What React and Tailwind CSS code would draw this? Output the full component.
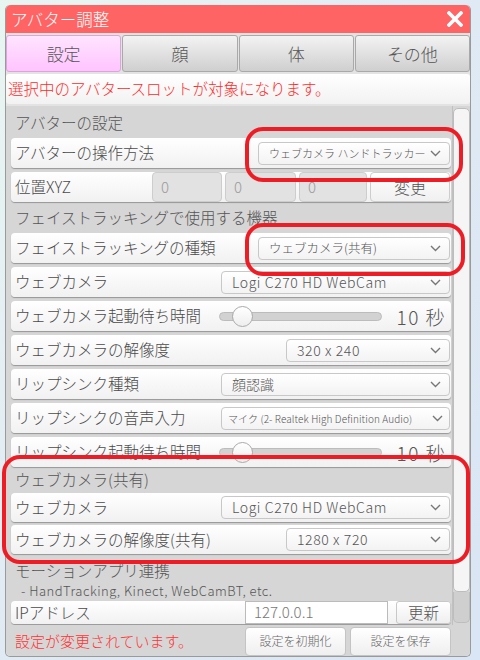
import React from 'react'

// 下向き矢印
function Chevron() {
  return (
    <svg width="11" height="7" viewBox="0 0 11 7" className="shrink-0">
      <polyline points="1,1 5.5,5.5 10,1" fill="none" stroke="#777" strokeWidth="1.4" />
    </svg>
  )
}

function Select({ value, className, textClass }) {
  return (
    <div className={`flex h-[23px] items-center justify-between rounded-[4px] border border-[#c8c8c8] bg-gradient-to-b from-white to-[#f3f3f3] pl-[10px] pr-[8px] ${className}`}>
      <span className={`whitespace-nowrap text-[#555] ${textClass}`}>{value}</span>
      <Chevron />
    </div>
  )
}

function Row({ label, children, className = 'h-[30px] mt-[4px]' }) {
  return (
    <div className={`flex items-center justify-between rounded-[4px] bg-gradient-to-b from-white to-[#f1f1f1] pl-[4px] pr-[1px] shadow-[0_1px_1px_rgba(0,0,0,0.3)] ${className}`}>
      <span className="whitespace-nowrap text-[15.5px] text-[#4a4a4a]">{label}</span>
      {children}
    </div>
  )
}

function Heading({ children, className = 'mt-[4px] h-[23px]' }) {
  return (
    <div className={`flex items-center pl-[4px] text-[15.5px] text-[#555] ${className}`}>{children}</div>
  )
}

function Slider() {
  return (
    <div className="flex items-center">
      <div className="relative h-[9px] w-[163px] rounded-full border border-[#bcbcbc] bg-[#d2d2d2]">
        <div className="absolute left-[12px] top-[-7px] h-[21px] w-[21px] rounded-full border border-[#aaa] bg-gradient-to-b from-white to-[#eee]" />
      </div>
      <span className="ml-[14px] mr-[4px] whitespace-nowrap text-[19px] leading-none tracking-[1.5px] text-[#555]">10 秒</span>
    </div>
  )
}

function Tab({ label, active }) {
  return (
    <div
      className={`flex items-center justify-center rounded-[3px] border text-[17px] text-[#555] ${
        active
          ? 'border-[#d9a6d9] bg-gradient-to-b from-[#ffe4ff] to-[#ffc4ff]'
          : 'border-[#a9a9a9] bg-gradient-to-b from-[#f3f3f3] to-[#cfcfcf]'
      }`}
    >
      {label}
    </div>
  )
}

export default function App() {
  return (
    <div className="relative h-[660px] w-[480px] overflow-hidden bg-gradient-to-br from-[#e8f6f2] via-[#e0eaf4] to-[#dae5f5] pl-[5px] pt-[5px] font-['Noto_Sans_CJK_JP',sans-serif] font-light">
      <div className="w-[466px] rounded-[5px] border-x border-b border-[#9a9a9a] bg-[#e3e3e3]">
        {/* タイトルバー */}
        <div className="flex h-[28px] items-center justify-between rounded-t-[5px] bg-[#ff6464] pl-[5px] pr-[7px]">
          <span className="text-[16.5px] text-white">アバター調整</span>
          <svg width="16" height="16" viewBox="0 0 16 16">
            <path d="M2 2 L14 14 M14 2 L2 14" stroke="white" strokeWidth="3.6" strokeLinecap="square" />
          </svg>
        </div>

        {/* タブ */}
        <div className="mt-[2px] grid h-[37px] grid-cols-4 gap-[1px]">
          <Tab label="設定" active />
          <Tab label="顔" />
          <Tab label="体" />
          <Tab label="その他" />
        </div>

        {/* メッセージ */}
        <div className="mt-[2px] flex h-[30px] items-center rounded-[3px] bg-gradient-to-b from-white to-[#f2f2f2] pl-[2px] text-[15.5px] text-[#ff2b2b]">
          選択中のアバタースロットが対象になります。
        </div>

        {/* 設定パネル */}
        <div className="mt-[2px] flex h-[519px] overflow-hidden bg-[#d6d6d6]">
          <div className="flex-1 pl-[5px] pr-[1px] pt-[1px]">
            <Heading>アバターの設定</Heading>
            <Row label="アバターの操作方法">
              <Select value="ウェブカメラ ハンドトラッカー" className="w-[192px]" textClass="text-[11px]" />
            </Row>
            <Row label="位置XYZ">
              <div className="flex h-full gap-[3px]">
                {['w-[70px]', 'w-[71px]', 'w-[68px]'].map((w, i) => (
                  <div key={i} className={`flex h-full items-center rounded-[4px] border border-[#cdcdcd] bg-[#e2e2e2] pl-[8px] text-[15px] text-[#9a9a9a] ${w}`}>
                    0
                  </div>
                ))}
                <div className="flex h-full w-[80px] items-center justify-center rounded-[4px] border border-[#cdcdcd] bg-gradient-to-b from-white to-[#f0f0f0] text-[16px] text-[#555]">
                  変更
                </div>
              </div>
            </Row>
            <Heading>フェイストラッキングで使用する機器</Heading>
            <Row label="フェイストラッキングの種類">
              <Select value="ウェブカメラ(共有)" className="w-[192px]" textClass="text-[12.5px]" />
            </Row>
            <Row label="ウェブカメラ">
              <Select value="Logi C270 HD WebCam" className="w-[229px]" textClass="text-[14px] tracking-[0.6px]" />
            </Row>
            <Row label="ウェブカメラ起動待ち時間">
              <Slider />
            </Row>
            <Row label="ウェブカメラの解像度">
              <Select value="320 x 240" className="w-[164px]" textClass="text-[14px] tracking-[0.6px]" />
            </Row>
            <Row label="リップシンク種類">
              <Select value="顔認識" className="w-[229px]" textClass="text-[14px]" />
            </Row>
            <Row label="リップシンクの音声入力">
              <Select value="マイク (2- Realtek High Definition Audio)" className="w-[229px] !pl-[6px] !pr-[6px]" textClass="text-[10px] tracking-[0.1px]" />
            </Row>
            <Row label="リップシンク起動待ち時間">
              <Slider />
            </Row>
            <Heading className="mt-[3px] h-[20px]">ウェブカメラ(共有)</Heading>
            <Row label="ウェブカメラ" className="mt-[3px] h-[29px]">
              <Select value="Logi C270 HD WebCam" className="w-[229px]" textClass="text-[14px] tracking-[0.6px]" />
            </Row>
            <Row label="ウェブカメラの解像度(共有)" className="mt-[3px] h-[29px]">
              <Select value="1280 x 720" className="w-[164px]" textClass="text-[14px] tracking-[0.6px]" />
            </Row>
            <Heading className="mt-[6px] h-[22px]">モーションアプリ連携</Heading>
            <div className="flex h-[18px] items-center pl-[10px] text-[13px] tracking-[0.5px] text-[#555]">
              - HandTracking, Kinect, WebCamBT, etc.
            </div>
            <Row label="IPアドレス" className="mt-[1px] h-[23px] !pr-0">
              <div className="flex h-full items-center">
                <div className="flex h-full w-[143px] items-center border border-[#bbb] bg-white pl-[8px] text-[15px] text-[#777]">
                  127.0.0.1
                </div>
                <div className="ml-[8px] flex h-full w-[55px] items-center justify-center rounded-[3px] border border-[#c8c8c8] bg-gradient-to-b from-white to-[#efefef] text-[15.5px] text-[#555]">
                  更新
                </div>
              </div>
            </Row>
          </div>

          {/* スクロールバー */}
          <div className="flex w-[18px] flex-col border-l border-[#c0c0c0] pb-[2px] pt-[2px]">
            <div className="h-[484px] rounded-[5px] border border-[#bdbdbd] bg-[#f5f5f5]" />
            <div className="flex-1 rounded-b-[5px] border border-t-0 border-[#bdbdbd] bg-[#cfcfcf]" />
          </div>
        </div>

        {/* フッター */}
        <div className="flex h-[31px] items-center justify-between rounded-b-[5px] bg-[#d6d6d6] pl-[9px] pr-[19px]">
          <span className="pt-[2px] text-[15px] text-[#ff3333]">設定が変更されています。</span>
          <div className="flex gap-[4px] pt-[1px]">
            <div className="flex h-[29px] w-[101px] items-center justify-center rounded-[4px] border border-[#c4c4c4] bg-gradient-to-b from-white to-[#efefef] text-[12px] text-[#666]">
              設定を初期化
            </div>
            <div className="flex h-[29px] w-[101px] items-center justify-center rounded-[4px] border border-[#c4c4c4] bg-gradient-to-b from-white to-[#efefef] text-[12px] text-[#666]">
              設定を保存
            </div>
          </div>
        </div>
      </div>

      {/* 赤枠の注釈 */}
      <div className="absolute left-[245px] top-[127px] h-[55px] w-[218px] rounded-[18px] border-4 border-[#ee1c24]" />
      <div className="absolute left-[245px] top-[223px] h-[53px] w-[220px] rounded-[18px] border-4 border-[#ee1c24]" />
      <div className="absolute left-[2px] top-[455px] h-[109px] w-[468px] rounded-[18px] border-4 border-[#ee1c24]" />
    </div>
  )
}
